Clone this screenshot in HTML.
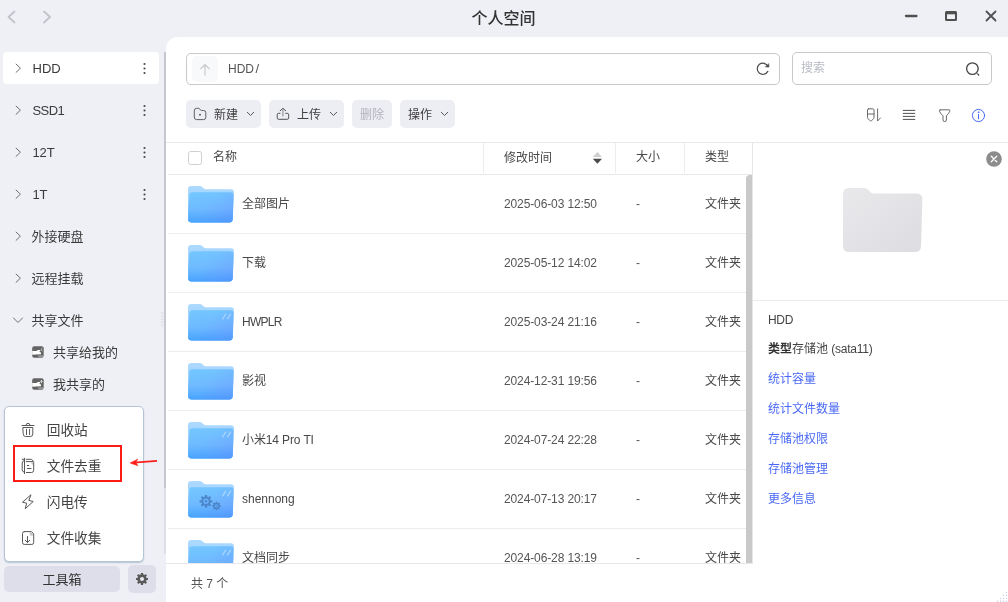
<!DOCTYPE html>
<html lang="zh-CN">
<head>
<meta charset="utf-8">
<title>个人空间</title>
<style>
*{box-sizing:border-box;margin:0;padding:0}
html,body{width:1008px;height:602px;overflow:hidden}
body{position:relative;background:#eff0f6;font-family:"Liberation Sans","Noto Sans CJK SC",sans-serif;font-size:12px;color:#444;-webkit-font-smoothing:antialiased}
.abs{position:absolute}
svg{position:absolute;overflow:visible}
.t{position:absolute;white-space:nowrap;line-height:20px;height:20px}
/* title bar */
#title{left:0;width:1008px;top:9.4px;text-align:center;font-size:16px;font-weight:500;color:#333;left:-0.5px}
/* sidebar */
.sel{left:3px;top:52px;width:156px;height:32px;background:#fff;border-radius:4px}
.si{font-size:13px;color:#3a3a3a;left:31.5px;margin-top:0.7px}
.sub{font-size:13px;color:#3a3a3a;left:53px;margin-top:0.5px}
#sbar{left:164px;top:52px;width:2px;height:436px;background:#c6c7cd}
#strack{left:164px;top:488px;width:2px;height:66px;background:#dddee6}
/* main */
#main{left:166px;top:37px;width:842px;height:565px;background:#fff;border-top-left-radius:12px}
.box{border:1px solid #c9c9cc;border-radius:5px;background:#fff}
.btn{background:#ededf4;border-radius:5px;height:27.5px;top:100.3px}
.hl{background:#e8e8ec;height:1px}
.vl{background:#ececf0;width:1px}
.row{font-size:12px;color:#484848}
.date{left:504px;color:#555}
.link{color:#4968f6;left:768px}
/* popup */
#pop{left:4px;top:406px;width:140px;height:156px;background:#fff;border:1px solid #b4c5d6;border-radius:5px;box-shadow:0 1px 1.5px rgba(90,120,155,.38)}
.pi{font-size:13.7px;color:#444;left:46.7px}
</style>
</head>
<body>
<div id="wrap" style="position:absolute;left:0;top:0;width:1008px;height:602px;will-change:transform">
<!-- title bar -->
<svg style="left:7px;top:10px" width="50" height="14" viewBox="0 0 50 14" fill="none" stroke="#c2c3c9" stroke-width="1.8" stroke-linecap="round" stroke-linejoin="round"><path d="M7.5 1.5 L1.5 7 L7.5 12.5"/><path d="M37 1.5 L43 7 L37 12.5"/></svg>
<div class="t" id="title">个人空间</div>
<svg style="left:900px;top:8px" width="100" height="18" viewBox="0 0 100 18" fill="none" stroke="#505050" stroke-width="2" stroke-linecap="round"><path d="M6 8 H16.5" stroke-width="2.3"/><rect x="46" y="4" width="10" height="8" rx="0.5" stroke-linejoin="miter"/><path d="M46 5 H56" stroke-width="2.6" stroke-linecap="butt"/><path d="M86.5 3.5 L95.5 12.5 M95.5 3.5 L86.5 12.5" stroke-width="1.8"/></svg>

<!-- sidebar -->
<div class="abs sel"></div>
<div class="abs" id="sbar"></div><div class="abs" id="strack"></div>
<div class="t si" style="top:58px;left:32.4px;letter-spacing:0.1px">HDD</div>
<div class="t si" style="top:100px;left:32.4px;letter-spacing:-0.55px">SSD1</div>
<div class="t si" style="top:142px;left:32.4px">12T</div>
<div class="t si" style="top:184px;left:32.4px">1T</div>
<div class="t si" style="top:226px">外接硬盘</div>
<div class="t si" style="top:268px">远程挂载</div>
<div class="t si" style="top:310px">共享文件</div>
<div class="t sub" style="top:342px">共享给我的</div>
<div class="t sub" style="top:374px">我共享的</div>


<!-- sidebar chevrons & dots -->
<svg style="left:0;top:52px" width="166" height="350" viewBox="0 52 166 350" fill="none" stroke="#666" stroke-width="0.95" stroke-linecap="round" stroke-linejoin="round">
<path d="M16.1 64.1 L20.4 68.2 L16.1 72.3"/>
<path d="M16.1 106.10000000000001 L20.4 110.2 L16.1 114.3"/>
<path d="M16.1 148.1 L20.4 152.2 L16.1 156.29999999999998"/>
<path d="M16.1 190.1 L20.4 194.2 L16.1 198.29999999999998"/>
<path d="M16.1 232.1 L20.4 236.2 L16.1 240.29999999999998"/>
<path d="M16.1 274.09999999999997 L20.4 278.2 L16.1 282.3"/>
<path d="M13.5 318 L18 322.5 L22.5 318"/>
<g fill="#444" stroke="none">
<circle cx="144.5" cy="64" r="1.05"/><circle cx="144.5" cy="68.5" r="1.05"/><circle cx="144.5" cy="73" r="1.05"/>
<circle cx="144.5" cy="106" r="1.05"/><circle cx="144.5" cy="110.5" r="1.05"/><circle cx="144.5" cy="115" r="1.05"/>
<circle cx="144.5" cy="148" r="1.05"/><circle cx="144.5" cy="152.5" r="1.05"/><circle cx="144.5" cy="157" r="1.05"/>
<circle cx="144.5" cy="190" r="1.05"/><circle cx="144.5" cy="194.5" r="1.05"/><circle cx="144.5" cy="199" r="1.05"/>
</g>
<g fill="#ccced6" stroke="none">
<circle cx="161.5" cy="313" r="0.6"/><circle cx="163" cy="313" r="0.6"/><circle cx="161.5" cy="316" r="0.6"/><circle cx="163" cy="316" r="0.6"/><circle cx="161.5" cy="319" r="0.6"/><circle cx="163" cy="319" r="0.6"/><circle cx="161.5" cy="322" r="0.6"/><circle cx="163" cy="322" r="0.6"/><circle cx="161.5" cy="325" r="0.6"/><circle cx="163" cy="325" r="0.6"/>
</g>
<!-- share icons -->
<g transform="translate(32.2,346.2)"><rect x="0" y="0" width="11.5" height="11.5" rx="2" fill="#636363" stroke="none"/><path d="M0 4.9 L4.2 4.7 L5.6 3.9 H8 V5.1 L6.8 5.6 L8.8 6.2 V8 L3.8 8.3 L0 8.6 Z" fill="#fff" stroke="none"/><path d="M6.4 9.9 H10.6" stroke="#d8d8d8" stroke-width="0.8"/><path d="M9.9 2.4 L8.7 3.4 L9.9 4.4" stroke="#e8e8e8" stroke-width="0.8" fill="none"/></g>
<g transform="translate(32.2,378.2)"><rect x="0" y="0" width="11.5" height="11.5" rx="2" fill="#636363" stroke="none"/><path d="M0 4.9 L4.2 4.7 L5.6 3.9 H8 V5.1 L6.8 5.6 L8.8 6.2 V8 L3.8 8.3 L0 8.6 Z" fill="#fff" stroke="none"/><path d="M6.4 9.9 H10.6" stroke="#d8d8d8" stroke-width="0.8"/><path d="M9.3 4.6 V2.2 M8.3 3.2 L9.3 2.1 L10.3 3.2" stroke="#e8e8e8" stroke-width="0.8" fill="none"/></g>
</svg>
<div class="abs" id="main"></div>

<svg width="0" height="0" style="left:0;top:0">
<defs>
<linearGradient id="fg" x1="0" y1="0" x2="0" y2="1"><stop offset="0" stop-color="#73c7ff"/><stop offset="0.55" stop-color="#6fbcff"/><stop offset="1" stop-color="#47a6ff"/></linearGradient>
<linearGradient id="fg2" x1="0" y1="0.2" x2="1" y2="0.8"><stop offset="0" stop-color="#6878ff" stop-opacity="0"/><stop offset="0.4" stop-color="#6878ff" stop-opacity="0.04"/><stop offset="1" stop-color="#6878ff" stop-opacity="0.28"/></linearGradient>
<linearGradient id="fb" x1="0" y1="0" x2="0" y2="1"><stop offset="0" stop-color="#aedaff"/><stop offset="0.35" stop-color="#9fd2ff"/><stop offset="1" stop-color="#47a6ff"/></linearGradient>
<linearGradient id="gg" x1="0" y1="0" x2="1" y2="1"><stop offset="0" stop-color="#e9e9ec"/><stop offset="1" stop-color="#dddde1"/></linearGradient>
<g id="fold">
<path d="M0 3.2 Q0 0 3.2 0 H11.8 Q13.2 0 14.2 0.9 L15.8 2.4 Q16.7 3.2 18 3.2 H42.8 Q46 3.2 46 6.4 L44.8 33.3 Q44.6 36.5 41.3 36.5 H3.6 Q0.1 36.5 0.1 33.3 Z" fill="url(#fb)"/>
<path d="M1.3 9.4 Q1.4 6.2 4.6 6.2 H42.3 Q45.6 6.2 45.5 9.4 L44.6 33.2 Q44.5 36.5 41.2 36.5 H3.6 Q0.2 36.5 0.3 33.2 Z" fill="url(#fg)"/>
<path d="M1.3 9.4 Q1.4 6.2 4.6 6.2 H42.3 Q45.6 6.2 45.5 9.4 L44.6 33.2 Q44.5 36.5 41.2 36.5 H3.6 Q0.2 36.5 0.3 33.2 Z" fill="url(#fg2)"/>
</g>
<g id="slash" stroke="#b4dbff" stroke-width="1.15" stroke-linecap="round" opacity="0.85"><path d="M37.7 10.1 L34.7 14.9 M42.6 10.1 L39.5 14.9"/></g>
<g id="gears" fill="#4a82c4" opacity="0.9">
<g transform="translate(18,20.3)"><circle r="4.7"/><rect x="-1.15" y="-6.4" width="2.3" height="12.8" rx="0.3" transform="rotate(0)"/><rect x="-1.15" y="-6.4" width="2.3" height="12.8" rx="0.3" transform="rotate(45)"/><rect x="-1.15" y="-6.4" width="2.3" height="12.8" rx="0.3" transform="rotate(90)"/><rect x="-1.15" y="-6.4" width="2.3" height="12.8" rx="0.3" transform="rotate(135)"/><circle r="2.7" fill="#68b5ff"/><circle r="1.2"/></g>
<g transform="translate(28.5,24.9)"><circle r="3.1"/><rect x="-0.8" y="-4.3" width="1.6" height="8.6" rx="0.3" transform="rotate(0)"/><rect x="-0.8" y="-4.3" width="1.6" height="8.6" rx="0.3" transform="rotate(45)"/><rect x="-0.8" y="-4.3" width="1.6" height="8.6" rx="0.3" transform="rotate(90)"/><rect x="-0.8" y="-4.3" width="1.6" height="8.6" rx="0.3" transform="rotate(135)"/><circle r="1.7" fill="#5eaaff"/><circle r="0.7"/></g>
</g>
</defs>
</svg>

<!-- list header -->
<div class="abs hl" style="left:166px;top:142px;width:842px"></div>
<div class="abs hl" style="left:168px;top:174px;width:584px"></div>
<div class="abs vl" style="left:483px;top:143px;height:30px"></div>
<div class="abs vl" style="left:615px;top:143px;height:30px"></div>
<div class="abs vl" style="left:684px;top:143px;height:30px"></div>
<div class="abs" style="left:188px;top:151px;width:14px;height:14px;border:1px solid #cfcfd3;border-radius:2.5px;background:#fff"></div>
<div class="t row" style="left:213px;top:147px">名称</div>
<div class="t row" style="left:504px;top:147.5px">修改时间</div>
<svg style="left:592px;top:151px" width="11" height="14" viewBox="0 0 11 14"><path d="M0.8 6 L5.4 1 L10 6 Z" fill="#cfcfd2"/><path d="M0.8 7.8 L5.4 12.8 L10 7.8 Z" fill="#4a4a4a"/></svg>
<div class="t row" style="left:636px;top:147px">大小</div>
<div class="t row" style="left:705px;top:147px">类型</div>
<div class="abs" id="rows" style="left:166px;top:175px;width:586px;height:388px;overflow:hidden">
<div class="abs" style="left:0;top:0px;width:586px;height:59px"><svg style="left:22px;top:10.5px" width="46" height="37" viewBox="0 0 46 37"><use href="#fold"/></svg><div class="t row" style="left:76px;top:19px">全部图片</div><div class="t row" style="left:338px;top:19px;color:#555;letter-spacing:-0.12px">2025-06-03 12:50</div><div class="t row" style="left:470px;top:19px;color:#555">-</div><div class="t row" style="left:539px;top:19px">文件夹</div><div class="abs hl" style="left:2px;top:58px;width:578px;background:#ededf0"></div></div>
<div class="abs" style="left:0;top:59px;width:586px;height:59px"><svg style="left:22px;top:10.5px" width="46" height="37" viewBox="0 0 46 37"><use href="#fold"/></svg><div class="t row" style="left:76px;top:19px">下载</div><div class="t row" style="left:338px;top:19px;color:#555;letter-spacing:-0.12px">2025-05-12 14:02</div><div class="t row" style="left:470px;top:19px;color:#555">-</div><div class="t row" style="left:539px;top:19px">文件夹</div><div class="abs hl" style="left:2px;top:58px;width:578px;background:#ededf0"></div></div>
<div class="abs" style="left:0;top:118px;width:586px;height:59px"><svg style="left:22px;top:10.5px" width="46" height="37" viewBox="0 0 46 37"><use href="#fold"/><use href="#slash"/></svg><div class="t row" style="left:76px;top:19px;letter-spacing:-0.75px">HWPLR</div><div class="t row" style="left:338px;top:19px;color:#555;letter-spacing:-0.12px">2025-03-24 21:16</div><div class="t row" style="left:470px;top:19px;color:#555">-</div><div class="t row" style="left:539px;top:19px">文件夹</div><div class="abs hl" style="left:2px;top:58px;width:578px;background:#ededf0"></div></div>
<div class="abs" style="left:0;top:177px;width:586px;height:59px"><svg style="left:22px;top:10.5px" width="46" height="37" viewBox="0 0 46 37"><use href="#fold"/></svg><div class="t row" style="left:76px;top:19px">影视</div><div class="t row" style="left:338px;top:19px;color:#555;letter-spacing:-0.12px">2024-12-31 19:56</div><div class="t row" style="left:470px;top:19px;color:#555">-</div><div class="t row" style="left:539px;top:19px">文件夹</div><div class="abs hl" style="left:2px;top:58px;width:578px;background:#ededf0"></div></div>
<div class="abs" style="left:0;top:236px;width:586px;height:59px"><svg style="left:22px;top:10.5px" width="46" height="37" viewBox="0 0 46 37"><use href="#fold"/><use href="#slash"/></svg><div class="t row" style="left:76px;top:19px;letter-spacing:-0.12px">小米14 Pro TI</div><div class="t row" style="left:338px;top:19px;color:#555;letter-spacing:-0.12px">2024-07-24 22:28</div><div class="t row" style="left:470px;top:19px;color:#555">-</div><div class="t row" style="left:539px;top:19px">文件夹</div><div class="abs hl" style="left:2px;top:58px;width:578px;background:#ededf0"></div></div>
<div class="abs" style="left:0;top:295px;width:586px;height:59px"><svg style="left:22px;top:10.5px" width="46" height="37" viewBox="0 0 46 37"><use href="#fold"/><use href="#slash"/><use href="#gears"/></svg><div class="t row" style="left:76px;top:19px">shennong</div><div class="t row" style="left:338px;top:19px;color:#555;letter-spacing:-0.12px">2024-07-13 20:17</div><div class="t row" style="left:470px;top:19px;color:#555">-</div><div class="t row" style="left:539px;top:19px">文件夹</div><div class="abs hl" style="left:2px;top:58px;width:578px;background:#ededf0"></div></div>
<div class="abs" style="left:0;top:354px;width:586px;height:59px"><svg style="left:22px;top:10.5px" width="46" height="37" viewBox="0 0 46 37"><use href="#fold"/><use href="#slash"/></svg><div class="t row" style="left:76px;top:19px">文档同步</div><div class="t row" style="left:338px;top:19px;color:#555;letter-spacing:-0.12px">2024-06-28 13:19</div><div class="t row" style="left:470px;top:19px;color:#555">-</div><div class="t row" style="left:539px;top:19px">文件夹</div></div>
</div>
<div class="abs" style="left:746px;top:175px;width:6px;height:388px;background:#c9c9c9;border-top-left-radius:4px"></div>
<div class="abs hl" style="left:166px;top:563px;width:587px"></div>
<div class="t row" style="left:191px;top:573.5px;color:#555">共 7 个</div>
<!-- path bar -->
<div class="abs box" style="left:186px;top:53px;width:594px;height:32px"></div>
<div class="abs" style="left:192px;top:56px;width:26px;height:26px;background:#f8f9fb;border-radius:5px"></div>
<svg style="left:199px;top:63px" width="12" height="13" viewBox="0 0 12 13" fill="none" stroke="#cfcfd2" stroke-width="1.3" stroke-linecap="round" stroke-linejoin="round"><path d="M6 12 V1.5 M1.8 5.7 L6 1.5 L10.2 5.7"/></svg>
<div class="t" style="left:228px;top:58.5px;font-size:13px;color:#555;transform:scaleX(0.925);transform-origin:0 0">HDD</div><div class="t" style="left:255.4px;top:58.5px;font-size:13px;color:#555">/</div>
<svg style="left:755px;top:61px" width="16" height="16" viewBox="755 61 16 16" fill="none" stroke="#4a4a4a" stroke-width="1.2" stroke-linecap="round" stroke-linejoin="round"><path d="M767.9 66.3 A5.6 5.6 0 1 0 767.8 71.4"/><path d="M765.7 66.9 L768.9 67.1 L768.8 64 Z" fill="#4a4a4a" stroke-width="0.6"/></svg>
<!-- search -->
<div class="abs box" style="left:792px;top:52px;width:200px;height:33px"></div>
<div class="t" style="left:801px;top:57.5px;color:#b9bcc6;font-size:12px">搜索</div>
<svg style="left:964px;top:60px" width="18" height="18" viewBox="0 0 18 18" fill="none" stroke="#444" stroke-width="1.3" stroke-linecap="round"><circle cx="8.4" cy="8.6" r="5.8"/><path d="M13.6 13.9 L14.7 15"/></svg>

<!-- toolbar buttons -->
<div class="abs btn" style="left:186px;width:75px"></div>
<div class="abs btn" style="left:269px;width:75px"></div>
<div class="abs btn" style="left:352px;width:40px"></div>
<div class="abs btn" style="left:400px;width:55px"></div>
<svg style="left:193px;top:107px" width="14" height="14" viewBox="193 107 14 14" fill="none" stroke="#505050" stroke-width="0.9" stroke-linecap="round" stroke-linejoin="round"><path d="M194.3 110.5 Q194.3 108.3 196.5 108.3 H198.3 Q199.2 108.3 199.8 109.1 L200.4 109.9 Q200.9 110.5 201.7 110.5 H203.6 Q205.8 110.5 205.8 112.7 V117.4 Q205.8 119.6 203.6 119.6 H196.5 Q194.3 119.6 194.3 117.4 Z"/><circle cx="200" cy="114.8" r="1" fill="#666" stroke="none"/></svg>
<div class="t" style="left:214px;top:104.5px;color:#404040">新建</div>
<svg style="left:246px;top:111px" width="9" height="6" viewBox="0 0 9 6" fill="none" stroke="#5a5a5a" stroke-width="1" stroke-linecap="round" stroke-linejoin="round"><path d="M1.2 1.2 L4.5 4.5 L7.8 1.2"/></svg>
<svg style="left:276px;top:106px" width="14" height="15" viewBox="276 106 14 15" fill="none" stroke="#505050" stroke-width="1" stroke-linecap="round" stroke-linejoin="round"><path d="M282.9 109.2 V116.6" stroke="#a9a9ae" stroke-width="1.6" stroke-linecap="butt"/><path d="M280 113.3 H278.7 Q277.2 113.3 277.2 114.8 V117.8 Q277.2 119.3 278.7 119.3 H287.2 Q288.7 119.3 288.7 117.8 V114.8 Q288.7 113.3 287.2 113.3 H285.8"/><path d="M280.2 110.8 L282.9 108.3 L285.7 110.8"/></svg>
<div class="t" style="left:297px;top:104.5px;color:#404040">上传</div>
<svg style="left:329px;top:111px" width="9" height="6" viewBox="0 0 9 6" fill="none" stroke="#5a5a5a" stroke-width="1" stroke-linecap="round" stroke-linejoin="round"><path d="M1.2 1.2 L4.5 4.5 L7.8 1.2"/></svg>
<div class="t" style="left:360px;top:104.5px;color:#b4b4bc">删除</div>
<div class="t" style="left:408px;top:104.5px;color:#404040">操作</div>
<svg style="left:440px;top:111px" width="9" height="6" viewBox="0 0 9 6" fill="none" stroke="#5a5a5a" stroke-width="1" stroke-linecap="round" stroke-linejoin="round"><path d="M1.2 1.2 L4.5 4.5 L7.8 1.2"/></svg>

<!-- right toolbar icons -->
<svg style="left:864px;top:106px" width="130" height="20" viewBox="864 106 130 20" fill="none" stroke="#6a6a6a" stroke-width="1" stroke-linecap="round" stroke-linejoin="round">
<path d="M868.7 108.8 H872.8 Q874 108.8 874 110 V117.5 Q874 118.3 873.3 119 L871.3 120.8 Q870.8 121.2 870.3 120.8 L868.2 119 Q867.5 118.3 867.5 117.5 V110 Q867.5 108.8 868.7 108.8 Z M867.5 114 H874"/><path d="M877.6 108.8 V121 L880.4 118"/>
<path d="M903.2 110.4 H914.8 M903.2 113.4 H914.8 M903.2 116.4 H914.8 M903.2 119.4 H914.8" stroke="#505050"/>
<path d="M940.3 109.8 H948.9 Q950.3 109.8 949.8 111.2 Q949 113.3 946.4 115.8 V120 Q946.4 121.6 944.7 121.6 Q943 121.6 943 120 V115.8 Q940.2 113.3 939.4 111.2 Q939 109.8 940.3 109.8 Z"/>
<g stroke="#466af6"><circle cx="978.5" cy="115.5" r="6.1"/><path d="M978.5 114.4 V118.8"/><circle cx="978.5" cy="112.2" r="0.35" fill="#466af6"/></g>
</svg>


<!-- right info panel -->
<div class="abs vl" style="left:752px;top:143px;height:421px;background:#e6e6ea"></div>
<svg style="left:986px;top:151px" width="16" height="16" viewBox="0 0 16 16"><circle cx="8" cy="8" r="7.8" fill="#8c8c8c"/><path d="M5.3 5.3 L10.7 10.7 M10.7 5.3 L5.3 10.7" stroke="#fff" stroke-width="1.3" stroke-linecap="round"/></svg>
<svg style="left:843px;top:188px" width="80" height="64" viewBox="0 0 80 64"><path d="M0 6 Q0 0 6 0 H21 Q23.5 0 25.2 1.8 L27.5 4.2 Q28.8 5.5 31 5.5 H73.5 Q79.5 5.5 79.4 11.5 L78 58 Q77.8 64 72 64 H6 Q0 64 0 58 Z" fill="url(#gg)"/></svg>
<div class="abs hl" style="left:753px;top:300px;width:255px;background:#ebebee"></div>
<div class="t row" style="left:768px;top:310px;color:#444;letter-spacing:-0.3px">HDD</div>
<div class="t row" style="left:768px;top:339px;color:#444"><b style="color:#333">类型</b>存储池 <span style="letter-spacing:-0.25px">(sata11)</span></div>
<div class="t row link" style="top:368.5px">统计容量</div>
<div class="t row link" style="top:398.5px">统计文件数量</div>
<div class="t row link" style="top:428.5px">存储池权限</div>
<div class="t row link" style="top:458.5px">存储池管理</div>
<div class="t row link" style="top:488.5px">更多信息</div>
<svg style="left:996px;top:590px" width="12" height="12" viewBox="0 0 12 12" fill="#c5cbe8"><circle cx="10.5" cy="2.5" r="0.7"/><circle cx="7.5" cy="5.5" r="0.7"/><circle cx="10.5" cy="5.5" r="0.7"/><circle cx="4.5" cy="8.5" r="0.7"/><circle cx="7.5" cy="8.5" r="0.7"/><circle cx="10.5" cy="8.5" r="0.7"/><circle cx="1.5" cy="11.3" r="0.7"/><circle cx="4.5" cy="11.3" r="0.7"/><circle cx="7.5" cy="11.3" r="0.7"/><circle cx="10.5" cy="11.3" r="0.7"/></svg>

<!-- popup -->
<div class="abs" id="pop"></div>
<svg style="left:18px;top:418px" width="20" height="132" viewBox="18 418 20 132" fill="none" stroke="#585858" stroke-width="1" stroke-linecap="round" stroke-linejoin="round">
<!-- trash -->
<path d="M22 425.5 H34 M26 425.3 Q26 423.3 28 423.3 Q30 423.3 30 425.3"/><path d="M23.2 427.5 H32.8 V434 Q32.8 436.5 30.3 436.5 H25.7 Q23.2 436.5 23.2 434 Z"/><path d="M26.5 429.3 V434.6 M29.6 429.3 V434.6"/>
<!-- dedupe -->
<path d="M24.5 458.3 V473.6"/><path d="M22.2 459.3 H24.5 M24.5 460.5 Q22.2 460.8 22.2 463 V469.8 Q22.2 472 24.5 472.3"/>
<path d="M26.3 459.3 H31.5 L33.8 461.6 M26.3 461.6 H32.6 M33.7 462.6 V470.3 Q33.7 472.5 31.5 472.5 H26.3"/><path d="M27.3 465.5 H28.8 M27.3 468.5 H31"/><path d="M30.6 462.6 H33 V465 Z" fill="#bbb" stroke="none"/>
<!-- flash -->
<path d="M30.7 495 L22.5 502.2 L26.7 503.2 L25.2 508.7 L33.2 501.5 L29.2 500.5 Z"/>
<!-- collect -->
<path d="M24.3 531.6 H31.4 L33.7 533.9 V542.6 Q33.7 544.4 31.9 544.4 H24.3 Q22.5 544.4 22.5 542.6 V533.4 Q22.5 531.6 24.3 531.6 Z"/><path d="M29.8 532.3 H31.2 L33 534.1 V535.4 H29.8 Z" fill="#c4c4c4" stroke="none"/><path d="M27.5 536.5 V542.3 M25.2 540.2 L27.5 542.5 L29.8 540.2"/>
</svg>
<div class="t pi" style="top:421px">回收站</div>
<div class="t pi" style="top:457px">文件去重</div>
<div class="t pi" style="top:493px">闪电传</div>
<div class="t pi" style="top:529px">文件收集</div>
<div class="abs" style="left:13px;top:445px;width:109px;height:37px;border:2px solid #fb1c16"></div>
<svg style="left:128px;top:455px" width="32" height="12" viewBox="128 455 32 12" fill="none" stroke="#fb1f1a" stroke-width="1.7" stroke-linecap="butt" stroke-linejoin="round"><path d="M157 460.9 L134 462.6"/><path d="M130.2 463 L137.6 459.3 L135.8 462.5 L137.9 465.7 Z" fill="#fb1f1a" stroke-width="0.6"/></svg>

<!-- bottom buttons -->
<div class="abs" style="left:4px;top:566px;width:116px;height:26px;background:#dddeea;border-radius:5px"></div>
<div class="t" style="left:4px;width:116px;top:569.8px;text-align:center;font-size:13px;color:#333">工具箱</div>
<div class="abs" style="left:128px;top:565px;width:28px;height:28px;background:#dddeea;border-radius:5px"></div>
<svg style="left:135px;top:572px" width="14" height="14" viewBox="-7 -7 14 14"><g fill="#5a5a5a"><circle r="4.7"/><rect x="-1.1" y="-6" width="2.2" height="12" rx="0.3"/><rect x="-1.1" y="-6" width="2.2" height="12" rx="0.3" transform="rotate(45)"/><rect x="-1.1" y="-6" width="2.2" height="12" rx="0.3" transform="rotate(90)"/><rect x="-1.1" y="-6" width="2.2" height="12" rx="0.3" transform="rotate(135)"/></g><circle r="2" fill="#e9eaf2"/></svg>
</div>
</body>
</html>
